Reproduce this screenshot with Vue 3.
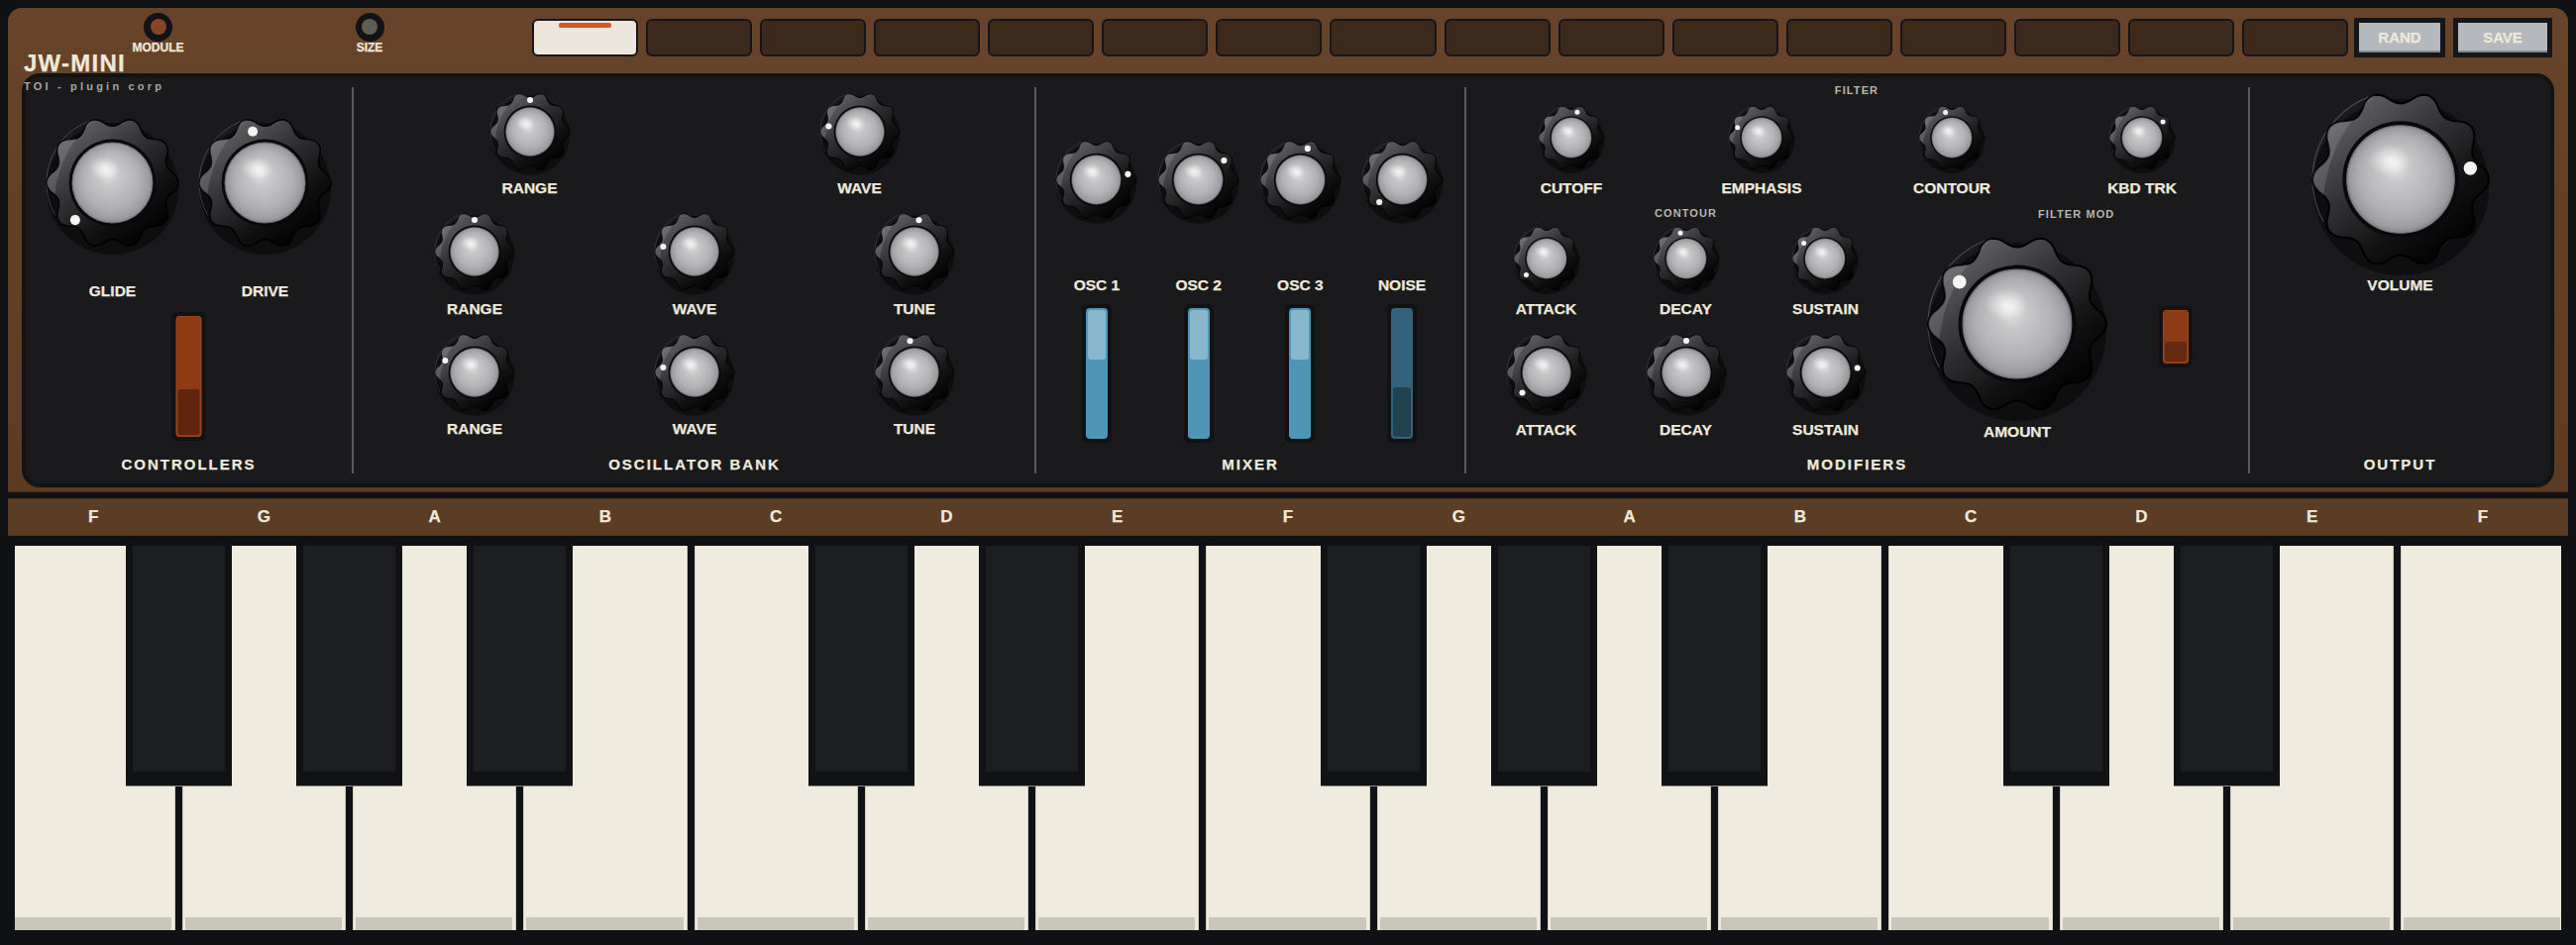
<script setup>
import { h } from 'vue'

const buildWavy = () => {
  const pts = []
  for (let i = 0; i < 360; i += 2) {
    const t = (i * Math.PI) / 180
    const c = Math.cos(10 * t)
    const r = 0.93 + 0.07 * Math.sign(c) * Math.pow(Math.abs(c), 0.9)
    pts.push(`${(r * Math.cos(t)).toFixed(4)} ${(r * Math.sin(t)).toFixed(4)}`)
  }
  return 'M' + pts.join('L') + 'Z'
}
const wavy = buildWavy()

const polar = (deg, r) => {
  const a = (deg * Math.PI) / 180
  return [r * Math.sin(a), -r * Math.cos(a)]
}
const p1 = polar(-119, 1)
const p2 = polar(-16, 1)
const arcD = `M${p1[0]} ${p1[1]}A1 1 0 0 1 ${p2[0]} ${p2[1]}`
const crescentD = `${arcD}A1.7 1.7 0 0 0 ${p1[0]} ${p1[1]}Z`

const Knob = (props) => {
  const [dx, dy] = polar(props.angle, 0.8)
  return h('svg', { width: props.size, height: props.size, viewBox: '-1 -1 2 2', class: 'knob', overflow: 'visible' }, [
    h('circle', { cx: 0, cy: 0.09, r: 1, fill: '#0e0e10' }),
    h('path', { d: arcD, fill: 'none', stroke: 'rgba(255,255,255,.2)', 'stroke-width': 0.014 }),
    h('path', { d: wavy, fill: 'url(#knobBody)', stroke: '#000', 'stroke-width': 0.022 }),
    h('path', { d: crescentD, fill: 'rgba(255,255,255,.12)', 'clip-path': 'url(#knobClip)' }),
    h('circle', { r: 0.66, fill: '#09090b' }),
    h('circle', { r: 0.61, fill: 'url(#knobHub)', stroke: '#77777b', 'stroke-width': 0.012 }),
    h('ellipse', { cx: -0.125, cy: -0.22, rx: 0.24, ry: 0.18, fill: 'url(#knobGlow)' }),
    h('circle', { cx: dx, cy: dy, r: 0.076, fill: '#f4f4f4' })
  ])
}

const steps = Array.from({ length: 16 }, (_, i) => i)
const sliders = [
  { on: true }, { on: true }, { on: true }, { on: false }
]
const mixKnobs = [
  { angle: 80 }, { angle: 53 }, { angle: 13 }, { angle: -134 }
]
const mixNames = ['OSC 1', 'OSC 2', 'OSC 3', 'NOISE']
const oscRows = [
  [['RANGE', 0], ['WAVE', -81], ['TUNE', 8]],
  [['RANGE', -68], ['WAVE', -81], ['TUNE', -8]]
]
const filterKnobs = [['CUTOFF', 13], ['EMPHASIS', -67], ['CONTOUR', -14], ['KBD TRK', 53]]
const contourA = [['ATTACK', -129], ['DECAY', -13], ['SUSTAIN', -54]]
const contourB = [['ATTACK', -130], ['DECAY', 0], ['SUSTAIN', 82]]
const notes = ['F', 'G', 'A', 'B', 'C', 'D', 'E', 'F', 'G', 'A', 'B', 'C', 'D', 'E', 'F']
const blackAfter = new Set([0, 1, 2, 4, 5, 7, 8, 9, 11, 12])
</script>

<template>
  <div class="synth">
    <svg class="defs" width="0" height="0">
      <defs>
        <linearGradient id="knobBody" x1="0.14" y1="0.04" x2="0.84" y2="0.9">
          <stop offset="0" stop-color="#68686c" />
          <stop offset="0.4" stop-color="#343436" />
          <stop offset="0.75" stop-color="#101011" />
          <stop offset="1" stop-color="#000" />
        </linearGradient>
        <radialGradient id="knobHub" cx="0.5" cy="0.5" r="0.5" fx="0.44" fy="0.36">
          <stop offset="0" stop-color="#e6e6e7" />
          <stop offset="0.3" stop-color="#c6c6c8" />
          <stop offset="0.7" stop-color="#b2b2b5" />
          <stop offset="0.93" stop-color="#9c9ca0" />
          <stop offset="1" stop-color="#86868a" />
        </radialGradient>
        <radialGradient id="knobGlow">
          <stop offset="0" stop-color="#fff" stop-opacity="0.7" />
          <stop offset="0.6" stop-color="#fff" stop-opacity="0.28" />
          <stop offset="1" stop-color="#fff" stop-opacity="0" />
        </radialGradient>
        <clipPath id="knobClip"><path :d="wavy" /></clipPath>
      </defs>
    </svg>

    <section class="case">
      <header class="top">
        <div class="brand">
          <span class="logo">JW-MINI</span>
          <span class="maker">TOI - plugin corp</span>
        </div>
        <div class="jack">
          <span class="socket"><i class="socket-in rust"></i></span>
          <span class="jack-label">MODULE</span>
        </div>
        <div class="jack jack-size">
          <span class="socket"><i class="socket-in grey"></i></span>
          <span class="jack-label">SIZE</span>
        </div>
        <div class="steps">
          <div v-for="s in steps" :key="s" class="step" :class="{ active: s === 0 }">
            <i v-if="s === 0" class="step-bar"></i>
          </div>
        </div>
        <button class="btn rand">RAND</button>
        <button class="btn save">SAVE</button>
      </header>

      <div class="panel">
        <div class="sec ctrl">
          <div class="ctrl-knobs">
            <div class="cell ctrl-cell"><Knob :size="133" :angle="-135" /><span class="lbl">GLIDE</span></div>
            <div class="cell ctrl-cell"><Knob :size="133" :angle="-13.5" /><span class="lbl">DRIVE</span></div>
          </div>
          <div class="rocker tall"><div class="rocker-in"><i class="rocker-th tall-th"></i></div></div>
          <div class="title">CONTROLLERS</div>
        </div>

        <div class="sec osc">
          <div class="osc-two">
            <div class="cell"><Knob :size="80" :angle="0" /><span class="lbl">RANGE</span></div>
            <div class="cell"><Knob :size="80" :angle="-80" /><span class="lbl">WAVE</span></div>
          </div>
          <div v-for="(row, i) in oscRows" :key="i" class="osc-three">
            <div v-for="k in row" :key="k[0]" class="cell"><Knob :size="80" :angle="k[1]" /><span class="lbl">{{ k[0] }}</span></div>
          </div>
          <div class="title">OSCILLATOR BANK</div>
        </div>

        <div class="sec mix">
          <div class="mix-grid mix-knobs">
            <div v-for="(k, i) in mixKnobs" :key="i" class="cell"><Knob :size="81" :angle="k.angle" /></div>
          </div>
          <div class="mix-grid mix-names">
            <span v-for="n in mixNames" :key="n" class="lbl mix-name">{{ n }}</span>
          </div>
          <div class="mix-grid mix-sliders">
            <div v-for="(s, i) in sliders" :key="i" class="slider">
              <div class="slider-in" :class="{ dim: !s.on }"><i class="slider-th"></i></div>
            </div>
          </div>
          <div class="title">MIXER</div>
        </div>

        <div class="sec mod">
          <div class="small filter-tag">FILTER</div>
          <div class="filter-row">
            <div v-for="k in filterKnobs" :key="k[0]" class="cell"><Knob :size="66" :angle="k[1]" /><span class="lbl">{{ k[0] }}</span></div>
          </div>
          <div class="mod-lower">
            <div class="contour">
              <div class="small contour-tag">CONTOUR</div>
              <div class="contour-row first">
                <div v-for="k in contourA" :key="k[0]" class="cell"><Knob :size="66" :angle="k[1]" /><span class="lbl">{{ k[0] }}</span></div>
              </div>
              <div class="contour-row">
                <div v-for="k in contourB" :key="k[0]" class="cell"><Knob :size="80" :angle="k[1]" /><span class="lbl">{{ k[0] }}</span></div>
              </div>
            </div>
            <div class="fmod">
              <div class="small fmod-tag">FILTER MOD</div>
              <div class="fmod-row">
                <div class="cell amount"><Knob :size="180" :angle="-54" /><span class="lbl">AMOUNT</span></div>
                <div class="rocker short"><div class="rocker-in"><i class="rocker-th short-th"></i></div></div>
              </div>
            </div>
          </div>
          <div class="title">MODIFIERS</div>
        </div>

        <div class="sec out">
          <div class="cell vol"><Knob :size="178" :angle="81" /><span class="lbl">VOLUME</span></div>
          <div class="title">OUTPUT</div>
        </div>
      </div>
    </section>

    <div class="notes">
      <span v-for="(n, i) in notes" :key="i" class="note">{{ n }}</span>
    </div>

    <div class="keys">
      <div v-for="(n, i) in notes" :key="i" class="white">
        <i class="lip"></i>
        <div v-if="blackAfter.has(i)" class="black"><i class="black-top"></i></div>
      </div>
    </div>
  </div>
</template>

<style>
html, body { margin: 0; background: #101114; }
* { box-sizing: border-box; }
</style>

<style scoped>
.synth {
  width: 2600px;
  height: 954px;
  padding: 8px 8px 0;
  background: #101114;
  position: relative;
  overflow: hidden;
  font-family: "Liberation Sans", Arial, sans-serif;
  font-weight: 700;
  color: #efe9dc;
  -webkit-text-stroke: 0.25px #efe9dc;
}
.defs { position: absolute; }
.knob { display: block; flex: none; }

.case {
  height: 489px;
  border-radius: 14px 14px 0 0;
  background: linear-gradient(180deg, #674429 0%, #5b3b22 100%);
  box-shadow: inset 0 -1px 0 #4b3019;
}
.top { height: 66px; display: flex; align-items: flex-start; position: relative; }
.brand { width: 116px; padding: 43.5px 0 0 16px; position: relative; flex: none; }
.logo { display: block; font-size: 24px; line-height: 24px; letter-spacing: 1.25px; white-space: nowrap; }
.maker {
  position: absolute;
  left: 16px;
  top: 71.5px;
  font-size: 11px;
  line-height: 14px;
  letter-spacing: 3.2px;
  color: #a8a69d;
  -webkit-text-stroke: 0;
  white-space: nowrap;
  z-index: 2;
}
.jack { width: 71px; flex: none; display: flex; flex-direction: column; align-items: center; padding-top: 4.5px; }
.jack-size { margin-left: 142.5px; }
.socket { width: 29px; height: 29px; border-radius: 50%; background: #121316; display: flex; align-items: center; justify-content: center; }
.socket-in { width: 16px; height: 16px; border-radius: 50%; display: block; }
.rust { background: #884525; }
.grey { background: #5f5e55; }
.jack-label { font-size: 12px; line-height: 14px; margin-top: -1px; white-space: nowrap; }

.steps {
  margin: 11px 0 0 128.5px;
  width: 1833px;
  flex: none;
  display: grid;
  grid-template-columns: repeat(16, 1fr);
  gap: 8px;
}
.step {
  height: 38px;
  border: 2px solid #15151a;
  border-radius: 6px;
  background: #3b2a1b;
  display: flex;
  justify-content: center;
}
.step.active { background: #ece6dc; }
.step-bar { width: 53px; height: 5px; margin-top: 1.5px; border-radius: 2px; background: #d25a22; display: block; }

.btn {
  height: 40px;
  margin-top: 10px;
  border: 5px solid #15161a;
  background: #b5b8bc;
  box-shadow: inset 0 -2px 0 #85888c;
  color: #efe9dc;
  font: 700 15px/28px "Liberation Sans", Arial, sans-serif;
  padding: 0;
}
.rand { width: 92px; margin-left: 6px; }
.save { width: 100px; margin-left: 8px; }

.panel {
  height: 418px;
  margin: 0 14px;
  padding: 10px 0;
  border: 4px solid #121315;
  border-radius: 18px;
  background: #1a1a1d;
  display: grid;
  grid-template-columns: 329px 689px 434px 791px 305px;
}
.sec { display: flex; flex-direction: column; height: 390px; border-left: 2px solid #5a5a5d; position: relative; min-width: 0; }
.ctrl { border-left: 0; }
.title {
  margin-top: auto;
  height: 18px;
  line-height: 18px;
  font-size: 15px;
  letter-spacing: 2px;
  text-align: center;
  white-space: nowrap;
}
.cell { display: flex; flex-direction: column; align-items: center; }
.lbl { font-size: 15.5px; line-height: 18px; margin-top: 8.5px; white-space: nowrap; }
.small { font-size: 11px; letter-spacing: 1.1px; color: #b8b5ab; -webkit-text-stroke: 0; white-space: nowrap; }

.ctrl-knobs { display: grid; grid-template-columns: 154px 154px; justify-content: center; padding-top: 29.5px; }
.ctrl-cell .lbl { margin-top: 34px; }

.rocker { width: 34px; padding: 4px; border-radius: 5px; background: #111214; }
.rocker-in {
  height: 100%;
  border-radius: 4px;
  background: #8e3a14;
  position: relative;
  box-shadow: inset 0 0 0 1px #a04416;
}
.rocker-th { position: absolute; left: 2px; right: 2px; bottom: 2px; border-radius: 3px; background: #5e2410; display: block; }
.tall { height: 130px; margin: 12.5px auto 0; transform: translateX(-0.5px); }
.tall-th { height: 46px; }
.short { height: 62px; flex: none; margin: 72px 0 0 53px; }
.short-th { height: 20px; background: #652a12; }

.osc { padding: 4.5px 10px 0 11px; }
.osc-two { display: grid; grid-template-columns: 1fr 1fr; margin-bottom: 15px; }
.osc-three { display: grid; grid-template-columns: repeat(3, 1fr); margin-bottom: 15px; }
.osc-three:last-of-type { margin-bottom: 0; }

.mix-grid { display: grid; grid-template-columns: repeat(4, 102.7px); margin-left: 9.65px; justify-items: center; }
.mix-knobs { padding-top: 53.2px; }
.mix-names { margin-top: 57px; }
.mix-name { margin-top: 0; }
.mix-sliders { margin-top: 10px; }
.slider { width: 30px; height: 140px; padding: 4px; border-radius: 5px; background: #111214; }
.slider-in { height: 132px; border-radius: 4px; background: #4f95b6; position: relative; }
.slider-th { position: absolute; left: 2px; right: 2px; top: 2px; height: 50px; border-radius: 3px; background: #88b7cd; display: block; }
.slider-in.dim { background: #33637a; }
.dim .slider-th { top: auto; bottom: 2px; background: #234250; }

.mod { padding: 0 10px; }
.filter-tag { height: 6px; line-height: 6px; text-align: center; width: 768px; }
.filter-row { display: grid; grid-template-columns: repeat(4, 192px); justify-items: center; margin-top: 12px; }
.filter-row .lbl { margin-top: 9px; }
.mod-lower { display: flex; padding-top: 9px; }
.contour { width: 423px; flex: none; }
.contour-tag { height: 14px; line-height: 14px; text-align: center; }
.contour-row { display: grid; grid-template-columns: repeat(3, 141px); justify-items: center; margin-top: 15px; }
.contour-row .lbl { margin-top: 9px; }
.contour-row.first { margin-top: 5.7px; }
.contour-row.first .lbl { margin-top: 9.3px; }
.fmod { flex: none; padding-top: 1px; }
.fmod-tag { height: 14px; line-height: 14px; padding-left: 144px; }
.fmod-row { display: flex; align-items: flex-start; margin-top: 14px; }
.amount { margin-left: 33px; width: 180px; flex: none; }
.amount .lbl { margin-top: 10px; }

.out { padding-top: 3.7px; }
.vol .lbl { margin-top: 9.3px; }

.notes { height: 38px; margin-top: 6px; display: grid; grid-template-columns: repeat(15, 1fr); background: #5b3c24; box-shadow: inset 0 1px 0 #4e321d, inset 0 -1px 0 #4e321d; }
.note { font-size: 17px; line-height: 38px; text-align: center; }

.keys { height: 388px; margin: 10px 7px 0; display: flex; gap: 7px; overflow: hidden; position: relative; }
.white {
  width: 165.27px;
  flex: none;
  height: 100%;
  background: #efebdf;
  position: relative;
  box-shadow: inset 1px 0 0 #cfcdc2, inset -1px 0 0 #cfcdc2;
}
.white:first-child { margin-left: -3.5px; }
.lip { position: absolute; left: 3px; right: 4px; bottom: 0; height: 13px; background: #c9c7ba; display: block; }
.black {
  position: absolute;
  top: 0;
  right: -57px;
  width: 107px;
  height: 242px;
  background: #111214;
  z-index: 2;
  box-shadow: 0 1px 0 #8a8a84;
}
.black-top { position: absolute; left: 7px; right: 7px; top: 0; bottom: 14px; background: #1d1e20; display: block; }
</style>
